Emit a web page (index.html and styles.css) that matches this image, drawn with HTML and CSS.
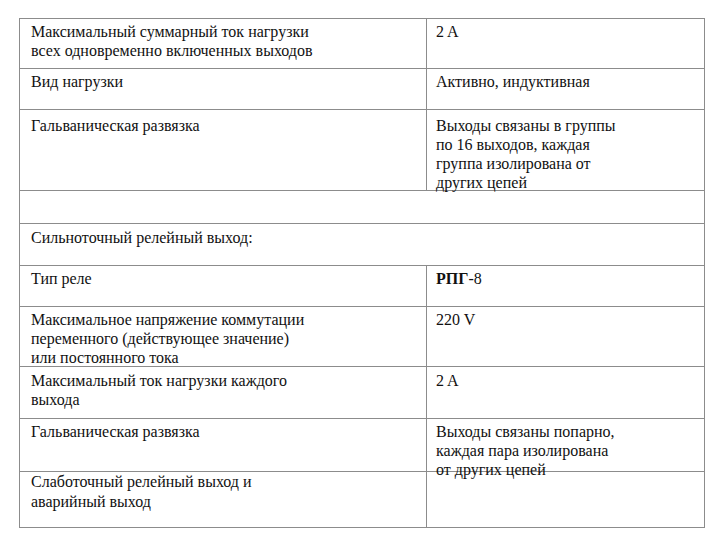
FILE: index.html
```html
<!DOCTYPE html>
<html lang="ru">
<head>
<meta charset="utf-8">
<link rel="stylesheet" href="styles.css">
</head>
<body>
<div class="spec">
  <div class="cell c1 r1">Максимальный суммарный ток нагрузки<br>всех одновременно включенных выходов</div>
  <div class="cell c2 r1">2 A</div>
  <div class="cell c1 r2">Вид нагрузки</div>
  <div class="cell c2 r2">Активно, индуктивная</div>
  <div class="cell c1 r3">Гальваническая развязка</div>
  <div class="cell c2 r3">Выходы связаны в группы<br>по 16 выходов, каждая<br>группа изолирована от<br>других цепей</div>
  <div class="cell span r4"></div>
  <div class="cell span r5">Сильноточный релейный выход:</div>
  <div class="cell c1 r6">Тип реле</div>
  <div class="cell c2 r6"><b class="mark">РПГ</b>-8</div>
  <div class="cell c1 r7">Максимальное напряжение коммутации<br>переменного (действующее значение)<br>или постоянного тока</div>
  <div class="cell c2 r7">220 V</div>
  <div class="cell c1 r8">Максимальный ток нагрузки каждого<br>выхода</div>
  <div class="cell c2 r8">2 A</div>
  <div class="cell c1 r9">Гальваническая развязка</div>
  <div class="cell c2 r9">Выходы связаны попарно,<br>каждая пара изолирована<br>от других цепей</div>
  <div class="cell c1 r10">Слаботочный релейный выход и<br>аварийный выход</div>
  <div class="cell c2 r10"></div>
</div>
</body>
</html>
```
FILE: styles.css
```css
html, body {
  margin: 0;
  padding: 0;
  background: #ffffff;
}
body {
  width: 720px;
  height: 540px;
  overflow: hidden;
  font-family: "Liberation Serif", "Times New Roman", serif;
  font-size: 16px;
  color: #111111;
}
.spec {
  margin: 18px 0 0 19px;
  width: 686px;
  box-sizing: border-box;
  border-left: 1px solid #8c8c8c;
  border-top: 1px solid #8c8c8c;
  display: grid;
  grid-template-columns: 407px 278px;
  grid-template-rows: 50px 41px 81px 33px 42px 41px 60px 52px 53px 56px;
}
.cell {
  box-sizing: border-box;
  border-right: 1px solid #8c8c8c;
  border-bottom: 1px solid #8c8c8c;
  padding: 3px 0 0 11px;
  line-height: 19px;
  white-space: nowrap;
  overflow: visible;
}
.c2 {
  padding-left: 9px;
}
.span {
  grid-column: 1 / 3;
}
.r3 {
  padding-top: 6px;
}
.r5 {
  padding-top: 4px;
}
.r8 {
  padding-top: 4px;
}
.r10 {
  padding-top: 0;
  line-height: 20px;
}
.mark {
  font-weight: bold;
}
```
